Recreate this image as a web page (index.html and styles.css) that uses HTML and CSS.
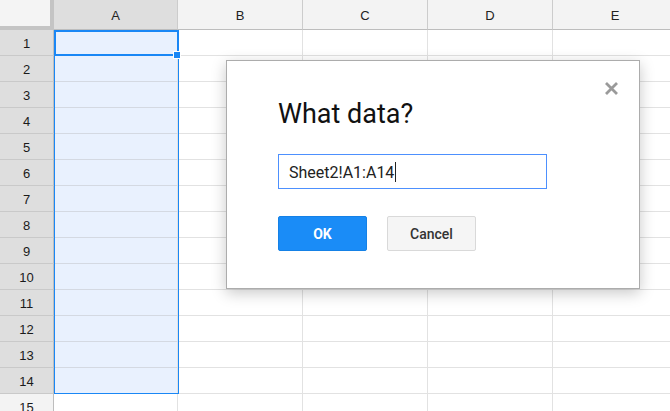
FILE: index.html
```html
<!DOCTYPE html>
<html>
<head>
<meta charset="utf-8">
<link rel="stylesheet" href="styles.css">
</head>
<body>
<div class="sheet">
  <div class="grid">
    <div class="corner"></div>
    <div class="colhead sel">A</div>
    <div class="colhead">B</div>
    <div class="colhead">C</div>
    <div class="colhead">D</div>
    <div class="colhead">E</div>

    <div class="rowhead sel">1</div><div class="cell a"></div><div class="cell"></div><div class="cell"></div><div class="cell"></div><div class="cell"></div>
    <div class="rowhead sel">2</div><div class="cell a"></div><div class="cell"></div><div class="cell"></div><div class="cell"></div><div class="cell"></div>
    <div class="rowhead sel">3</div><div class="cell a"></div><div class="cell"></div><div class="cell"></div><div class="cell"></div><div class="cell"></div>
    <div class="rowhead sel">4</div><div class="cell a"></div><div class="cell"></div><div class="cell"></div><div class="cell"></div><div class="cell"></div>
    <div class="rowhead sel">5</div><div class="cell a"></div><div class="cell"></div><div class="cell"></div><div class="cell"></div><div class="cell"></div>
    <div class="rowhead sel">6</div><div class="cell a"></div><div class="cell"></div><div class="cell"></div><div class="cell"></div><div class="cell"></div>
    <div class="rowhead sel">7</div><div class="cell a"></div><div class="cell"></div><div class="cell"></div><div class="cell"></div><div class="cell"></div>
    <div class="rowhead sel">8</div><div class="cell a"></div><div class="cell"></div><div class="cell"></div><div class="cell"></div><div class="cell"></div>
    <div class="rowhead sel">9</div><div class="cell a"></div><div class="cell"></div><div class="cell"></div><div class="cell"></div><div class="cell"></div>
    <div class="rowhead sel">10</div><div class="cell a"></div><div class="cell"></div><div class="cell"></div><div class="cell"></div><div class="cell"></div>
    <div class="rowhead sel">11</div><div class="cell a"></div><div class="cell"></div><div class="cell"></div><div class="cell"></div><div class="cell"></div>
    <div class="rowhead sel">12</div><div class="cell a"></div><div class="cell"></div><div class="cell"></div><div class="cell"></div><div class="cell"></div>
    <div class="rowhead sel">13</div><div class="cell a"></div><div class="cell"></div><div class="cell"></div><div class="cell"></div><div class="cell"></div>
    <div class="rowhead sel">14</div><div class="cell a"></div><div class="cell"></div><div class="cell"></div><div class="cell"></div><div class="cell"></div>
    <div class="rowhead">15</div><div class="cell"></div><div class="cell"></div><div class="cell"></div><div class="cell"></div><div class="cell"></div>
  </div>

  <div class="range"></div>
  <div class="active"></div>
  <div class="handle"></div>

  <div class="dialog">
    <div class="close" aria-label="Close">
      <svg width="15" height="15" viewBox="0 0 15 15"><path d="M2 2 L13 13 M13 2 L2 13" stroke="#9a9a9a" stroke-width="2.8" stroke-linecap="butt" fill="none"/></svg>
    </div>
    <h1 class="title">What data?</h1>
    <div class="input">Sheet2!A1:A14<span class="caret"></span></div>
    <div class="buttons">
      <button class="btn ok">OK</button>
      <button class="btn cancel">Cancel</button>
    </div>
  </div>
</div>
</body>
</html>
```
FILE: styles.css
```css
* { box-sizing: border-box; }
html, body { margin: 0; padding: 0; background: #fff; overflow: hidden; }
body { width: 670px; height: 411px; font-family: "Liberation Sans", Arial, sans-serif; }

.sheet { position: relative; width: 670px; height: 411px; overflow: hidden; }

.grid {
  display: grid;
  grid-template-columns: 54px 124px 125px 125px 125px 125px;
  grid-template-rows: 30px repeat(15, 26px);
  width: 678px;
}

.corner {
  background: #f4f4f4;
  border-right: 4px solid #c4c4c4;
  border-bottom: 4px solid #c4c4c4;
}

.colhead {
  background: #f3f3f3;
  border-right: 1px solid #cccccc;
  border-bottom: 1px solid #bdbdbd;
  color: #222;
  font-size: 13px;
  display: flex;
  align-items: center;
  justify-content: center;
  padding-top: 1px;
}
.colhead.sel { background: #dedede; }

.rowhead {
  background: #f3f3f3;
  border-right: 1px solid #bdbdbd;
  border-bottom: 1px solid #c9c9c9;
  color: #1a1a1a;
  font-size: 13px;
  display: flex;
  align-items: center;
  justify-content: center;
  padding-top: 1px;
}
.rowhead.sel { background: #dedede; }

.cell {
  border-right: 1px solid #e2e2e2;
  border-bottom: 1px solid #e2e2e2;
}
.cell.a { background: #e9f1fe; border-bottom-color: #d4d9e2; }

.range {
  position: absolute;
  left: 54px; top: 30px;
  width: 125px; height: 364px;
  border: 1px solid #1a87f5;
  pointer-events: none;
}
.active {
  position: absolute;
  left: 54px; top: 30px;
  width: 125px; height: 26px;
  border: 2px solid #1a87f5;
}
.handle {
  position: absolute;
  left: 173px; top: 51px;
  width: 8px; height: 8px;
  background: #1a87f5;
  border: 1px solid #fff;
}

.dialog {
  position: absolute;
  left: 226px; top: 60px;
  width: 414px; height: 229px;
  background: #fff;
  border: 1px solid #acacac;
  box-shadow: 0 4px 14px rgba(0,0,0,0.22);
  padding: 33px 0 0 51px;
}
.close {
  position: absolute;
  right: 20px; top: 20px;
  width: 15px; height: 15px;
  display: flex;
}
.title {
  margin: 0;
  font-family: Roboto, "Liberation Sans", sans-serif;
  font-weight: 400;
  font-size: 27px;
  line-height: 40px;
  color: #111;
}
.input {
  margin-top: 20px;
  width: 269px; height: 35px;
  border: 1px solid #4d90fe;
  font-family: Roboto, "Liberation Sans", sans-serif;
  font-size: 16px;
  color: #222;
  display: flex;
  align-items: center;
  padding-left: 10px;
  padding-top: 1px;
}
.caret {
  display: inline-block;
  width: 1px; height: 20px;
  background: #222;
  margin-left: 1px;
}
.buttons {
  display: flex;
  gap: 20px;
  margin-top: 27px;
}
.btn {
  height: 35px;
  font-family: Roboto, "Liberation Sans", sans-serif;
  font-size: 14px;
  border-radius: 2px;
  padding: 0;
  cursor: pointer;
}
.ok {
  width: 89px;
  background: #1a8cf7;
  border: 1px solid #1581e6;
  color: #fff;
  font-weight: 700;
}
.cancel {
  width: 89px;
  background: #f5f5f5;
  border: 1px solid #d9d9d9;
  color: #333;
  font-weight: 500;
}
```
